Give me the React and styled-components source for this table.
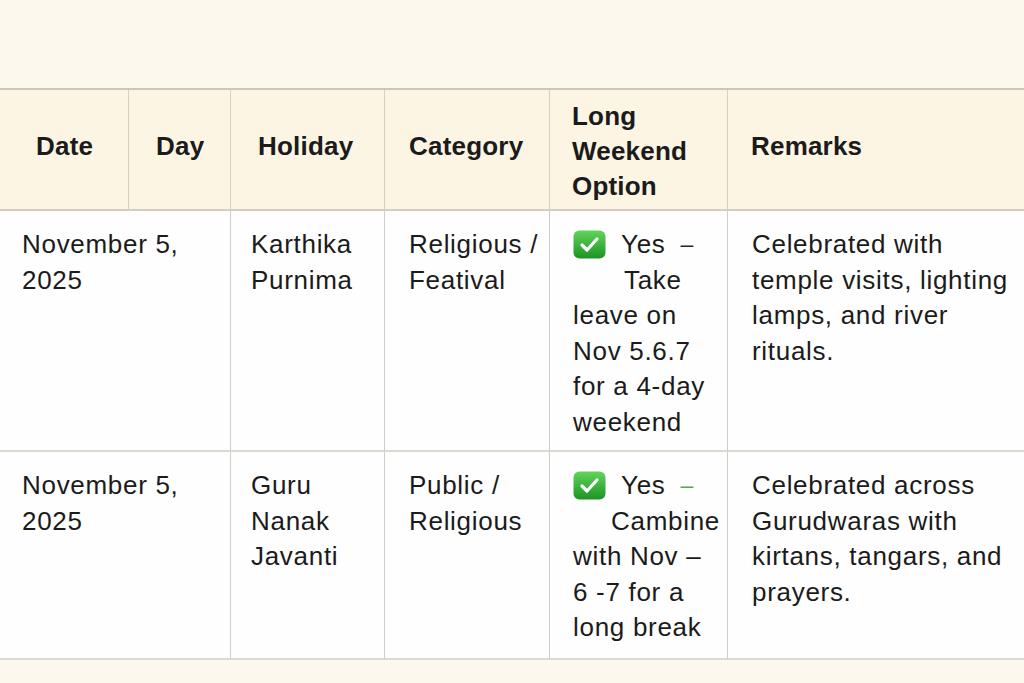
import React from "react";
import styled, { createGlobalStyle } from "styled-components";

const GlobalStyle = createGlobalStyle`
    body{
        margin: 0;
        padding: 0;
        background: #fdf8ee;
        font-family: "Liberation Sans", Arial, sans-serif;
        color: #1b1b1b;
    }
    *{
        box-sizing: border-box;
    }
`;

const Page = styled.main`
    width: 1024px;
    height: 683px;
    padding-top: 88px;
    overflow: hidden;
`;

const Table = styled.div`
    display: grid;
    grid-template-columns: 129px 102px 154px 165px 178px 1fr;
    grid-template-rows: 121px 241px 208px;
    border-top: 2px solid #cbc7bd;
`;

const HeadCell = styled.div`
    display: flex;
    align-items: center;
    padding-left: ${props => props.pad}px;
    padding-bottom: ${props => props.multi ? 0 : 7}px;
    padding-top: ${props => props.multi ? 4 : 0}px;
    background: #fdf5e3;
    border-bottom: 2px solid #d2cec3;
    border-right: ${props => props.last ? "none" : "1.5px solid #d4d0c6"};
    font-size: 26px;
    font-weight: bold;
    line-height: 35px;
    letter-spacing: 0.2px;
`;

const Cell = styled.div`
    grid-column: span ${props => props.span || 1};
    padding: 16px 0 0 ${props => props.pad}px;
    background: #fefefe;
    border-bottom: 2px solid #dcd9d2;
    border-right: ${props => props.last ? "none" : "1.5px solid #d0cdc7"};
    font-size: 26px;
    line-height: 35.5px;
    letter-spacing: 0.7px;
    white-space: nowrap;
`;

const Line = styled.div`
    display: flex;
    align-items: center;
    gap: 15px;
    padding-left: ${props => props.indent || 0}px;
    height: 35.5px;
`;

const Dash = styled.span`
    font-size: 23px;
    color: ${props => props.green ? "#4cae4c" : "#2a2a2a"};
`;

const CheckBox = () => (
    <svg width="33" height="29" viewBox="0 0 33 29">
        <defs>
            <linearGradient id="chk" x1="0" y1="0" x2="0" y2="1">
                <stop offset="0" stopColor="#62d45a" />
                <stop offset="1" stopColor="#1c9424" />
            </linearGradient>
        </defs>
        <rect x="0.5" y="0.5" width="32" height="28" rx="6" fill="url(#chk)" />
        <path d="M9 15 L14 20 L24 9" fill="none" stroke="#fff" strokeWidth="3.2" strokeLinecap="round" strokeLinejoin="round" />
    </svg>
);

const headers = [
    { label: ["Date"], pad: 36 },
    { label: ["Day"], pad: 27 },
    { label: ["Holiday"], pad: 27 },
    { label: ["Category"], pad: 24 },
    { label: ["Long", "Weekend", "Option"], pad: 22 },
    { label: ["Remarks"], pad: 23 },
];

const rows = [
    {
        date: ["November 5,", "2025"],
        holiday: ["Karthika", "Purnima"],
        category: ["Religious /", "Featival"],
        dashGreen: false,
        indent: 51,
        next: "Take",
        option: ["leave on", "Nov 5.6.7", "for a 4-day", "weekend"],
        remarks: ["Celebrated with", "temple visits, lighting", "lamps, and river", "rituals."],
    },
    {
        date: ["November 5,", "2025"],
        holiday: ["Guru", "Nanak", "Javanti"],
        category: ["Public /", "Religious"],
        dashGreen: true,
        indent: 38,
        next: "Cambine",
        option: ["with Nov –", "6 -7 for a", "long break"],
        remarks: ["Celebrated across", "Gurudwaras with", "kirtans, tangars, and", "prayers."],
    },
];

const Lines = ({ items }) => items.map(text => <Line key={text}>{text}</Line>);

const App = () => {
    return (
        <Page>
            <GlobalStyle />
            <Table>
                {headers.map((h, i) => (
                    <HeadCell key={i} pad={h.pad} multi={h.label.length > 1} last={i === headers.length - 1}>
                        <div>
                            {h.label.map(t => <div key={t}>{t}</div>)}
                        </div>
                    </HeadCell>
                ))}
                {rows.map((r, i) => (
                    <React.Fragment key={i}>
                        <Cell span={2} pad={22}><Lines items={r.date} /></Cell>
                        <Cell pad={20}><Lines items={r.holiday} /></Cell>
                        <Cell pad={24}><Lines items={r.category} /></Cell>
                        <Cell pad={23}>
                            <Line>
                                <CheckBox />
                                <span>Yes</span>
                                <Dash green={r.dashGreen}>–</Dash>
                            </Line>
                            <Line indent={r.indent}>{r.next}</Line>
                            <Lines items={r.option} />
                        </Cell>
                        <Cell pad={24} last><Lines items={r.remarks} /></Cell>
                    </React.Fragment>
                ))}
            </Table>
        </Page>
    );
};

export default App;
